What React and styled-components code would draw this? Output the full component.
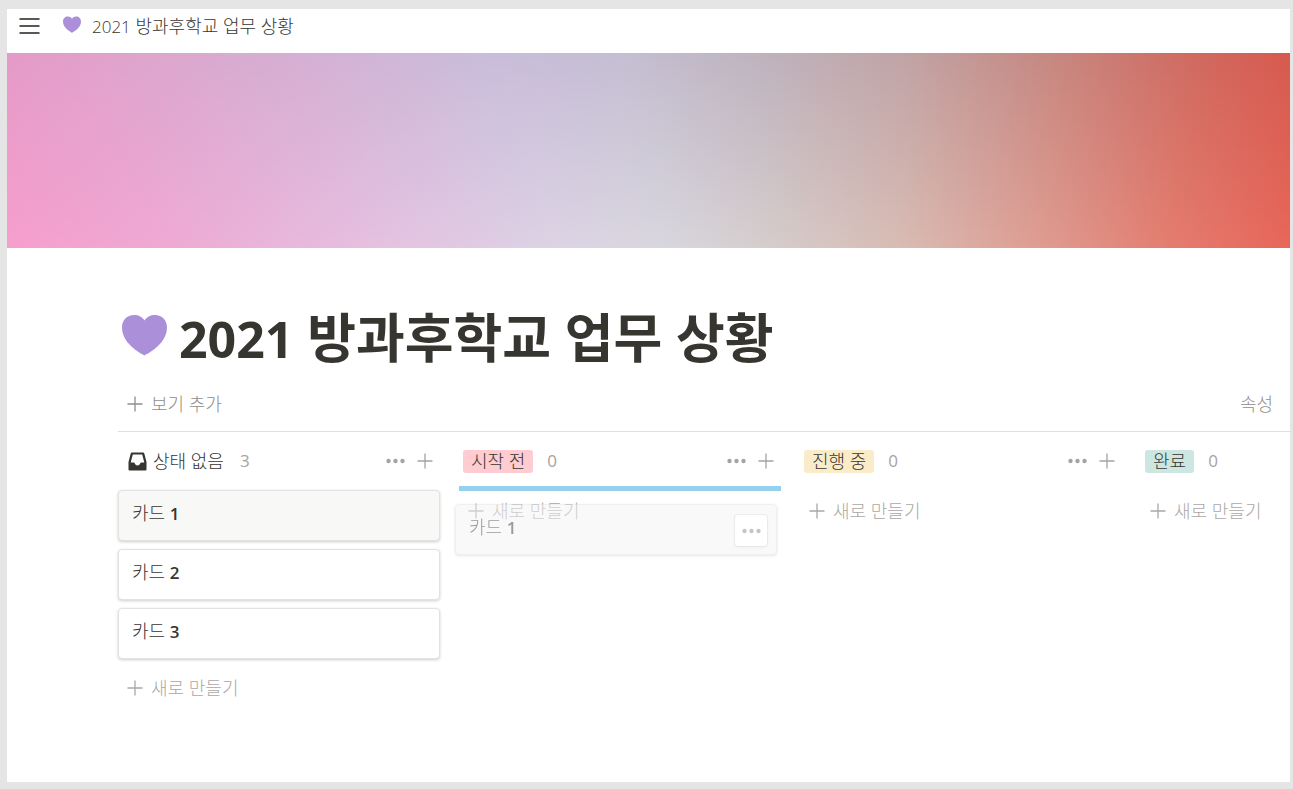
import React from "react";
import styled, { createGlobalStyle } from "styled-components";

const GlobalStyle = createGlobalStyle`
  * {
    box-sizing: border-box;
  }

  body {
    margin: 0;
    background: #e5e5e5;
    color: #37352f;
    font-family: "Open Sans", "Noto Sans CJK KR", sans-serif;
    font-size: 18px;
    line-height: 24px;
  }

  button {
    border: none;
    background: none;
    padding: 0;
    color: inherit;
    font: inherit;
    cursor: pointer;
  }
`;

const Page = styled.div`
  margin: 0 3px 0 7px;
  padding: 9px 0 7px;
`;

const Sheet = styled.div`
  min-height: calc(100vh - 16px);
  background: #fff;
  overflow: hidden;
`;

const TopBar = styled.header`
  display: flex;
  align-items: center;
  height: 44px;
  padding: 0 12px 10px;
`;

const MenuButton = styled.button`
  display: flex;
  margin-right: 23px;
`;

const Crumb = styled.a`
  display: flex;
  align-items: center;
  gap: 11px;
  color: #37352f;
  font-weight: 300;
  text-decoration: none;
`;

const Digits = styled.span`
  font-size: 17px;
`;

const Cover = styled.div`
  position: relative;
  height: 195px;
  background: linear-gradient(
    90deg,
    #f79fcd 0%,
    #f0a8d3 11%,
    #e6c0e0 28%,
    #ddd3e5 42%,
    #d9d7df 51%,
    #d6cecd 59%,
    #d9bbb3 70%,
    #e09b90 81%,
    #e57c6f 91%,
    #e8675a 100%
  );

  &::before {
    content: "";
    position: absolute;
    inset: 0;
    background: linear-gradient(
      90deg,
      #e49ac7 0%,
      #dca6cd 12%,
      #d5aed3 22%,
      #c9bcda 37%,
      #c4bed2 48%,
      #beb3bf 58%,
      #c0a3a5 70%,
      #c6867f 82%,
      #cf6b62 92%,
      #d65a4e 100%
    );
    mask-image: linear-gradient(180deg, #000, transparent);
  }
`;

const Content = styled.main`
  padding: 58px 0 0 111px;
`;

const TitleRow = styled.div`
  display: flex;
  align-items: center;
  gap: 12px;
  height: 64px;
  padding-left: 4px;
`;

const Title = styled.h1`
  margin: 0;
  font-size: 53px;
  font-weight: 700;
  line-height: 64px;
  white-space: nowrap;

  ${Digits} {
    font-size: 50px;
  }
`;

const ViewBar = styled.div`
  display: flex;
  align-items: center;
  justify-content: space-between;
  height: 62px;
  padding: 6px 17px 0 9px;
  border-bottom: 1px solid #e0e0df;
  color: #8f8e8a;
  font-weight: 300;
`;

const AddButton = styled.button`
  display: flex;
  align-items: center;
  gap: 8px;
`;

const Board = styled.div`
  display: flex;
  gap: 19px;
`;

const Column = styled.section`
  position: relative;
  flex: 0 0 322px;
`;

const ColumnHeader = styled.div`
  display: flex;
  align-items: center;
  height: 58px;
  padding: 0 7px 0 4px;
  color: #a5a4a1;
`;

const Status = styled.h2`
  display: flex;
  align-items: center;
  gap: 6px;
  height: 23px;
  margin: 0 14px 0 0;
  padding: 0 ${({ $color }) => ($color ? "8px" : "2px 0 6px")};
  border-radius: 3px;
  background: ${({ $color }) => $color || "transparent"};
  color: #37352f;
  font-size: 18px;
  font-weight: 300;
`;

const Actions = styled.div`
  display: flex;
  align-items: center;
  gap: 12px;
  margin-left: auto;

  button {
    display: flex;
  }
`;

const Card = styled.article`
  height: 51px;
  margin-bottom: 8px;
  padding: 10px 13px;
  border: 1px solid #e2e2e1;
  border-radius: 4px;
  background: ${({ $active }) => ($active ? "#f8f8f7" : "#fff")};
  box-shadow: 0 1px 3px rgba(15, 15, 15, 0.2);
  font-weight: 300;
`;

const CardNumber = styled(Digits)`
  font-weight: 600;
`;

const NewButton = styled(AddButton)`
  height: 42px;
  padding-left: 9px;
  color: #a9a8a5;
  font-weight: 300;
`;

const DropLine = styled.div`
  position: absolute;
  top: 54px;
  left: 0;
  right: 0;
  height: 5px;
  background: #93d1ec;
`;

const DraggedCard = styled(Card)`
  position: absolute;
  top: 72px;
  left: -4px;
  width: 322px;
  display: flex;
  justify-content: space-between;
  background: #f5f5f4;
  opacity: 0.5;
`;

const CardMenu = styled.button`
  display: flex;
  align-items: center;
  justify-content: center;
  width: 32px;
  height: 31px;
  margin-right: -4px;
  border-radius: 3px;
  background: #fff;
  box-shadow: 0 0 0 1px rgba(15, 15, 15, 0.1), 0 2px 4px rgba(15, 15, 15, 0.08);
  color: #908f8c;
`;

const Heart = ({ size }) => (
  <svg width={size} height={Math.round((size * 49) / 45)} viewBox="0 0 45 49" fill="#ab8fd8" aria-hidden="true">
    <path d="M22.5 41.5C17 38.5 0 29 0 13.5C0 6 5 1 12 1C16.5 1 20.5 3 22.5 6.5C24.5 3 28.5 1 33 1C40 1 45 6 45 13.5C45 29 28 38.5 22.5 41.5Z" />
  </svg>
);

const Plus = () => (
  <svg width="16" height="16" viewBox="0 0 16 16" stroke="currentColor" strokeWidth="1.3" aria-hidden="true">
    <path d="M8 0.5V15.5M0.5 8H15.5" />
  </svg>
);

const Dots = () => (
  <svg width="19" height="6" viewBox="0 0 19 6" fill="currentColor" aria-hidden="true">
    <circle cx="2.5" cy="3" r="2.2" />
    <circle cx="9.5" cy="3" r="2.2" />
    <circle cx="16.5" cy="3" r="2.2" />
  </svg>
);

const Inbox = () => (
  <svg width="19" height="19" viewBox="0 0 19 19" aria-hidden="true">
    <path
      fill="#37352f"
      fillRule="evenodd"
      d="M4 0.5H15Q16 0.5 16.3 1.5L18.5 10V17.5Q18.5 18.5 17.5 18.5H1.5Q0.5 18.5 0.5 17.5V10L2.7 1.5Q3 0.500 4 0.5ZM4.800 2.5L2.7 10.5H5.500Q6.500 10.500 6.800 11.500Q7.500 13.5 9.5 13.5Q11.500 13.5 12.200 11.500Q12.500 10.5 13.500 10.500H16.3L14.200 2.5Z"
    />
  </svg>
);

const columns = [
  { name: "상태 없음", count: 3, cards: [1, 2, 3] },
  { name: "시작 전", count: 0, color: "#ffccd1", cards: [], dropTarget: true },
  { name: "진행 중", count: 0, color: "#fbecc9", cards: [] },
  { name: "완료", count: 0, color: "#cce7e1", cards: [] },
];

const App = () => {
  return (
    <Page lang="ko">
      <GlobalStyle />
      <Sheet>
        <TopBar>
          <MenuButton aria-label="메뉴">
            <svg width="21" height="18" viewBox="0 0 21 18" stroke="#5a5853" strokeWidth="2" aria-hidden="true">
              <path d="M0.5 2H20.5M0.5 9H20.5M0.5 16H20.5" />
            </svg>
          </MenuButton>
          <Crumb href="#">
            <Heart size={18} />
            <span>
              <Digits>2021</Digits> 방과후학교 업무 상황
            </span>
          </Crumb>
        </TopBar>
        <Cover />

        <Content>
          <TitleRow>
            <Heart size={45} />
            <Title>
              <Digits>2021</Digits> 방과후학교 업무 상황
            </Title>
          </TitleRow>

          <ViewBar>
            <AddButton>
              <Plus />
              보기 추가
            </AddButton>
            <button>속성</button>
          </ViewBar>

          <Board>
            {columns.map((column) => (
              <Column key={column.name}>
                <ColumnHeader>
                  <Status $color={column.color}>
                    {!column.color && <Inbox />}
                    {column.name}
                  </Status>
                  <Digits>{column.count}</Digits>
                  <Actions>
                    <button aria-label="더 보기">
                      <Dots />
                    </button>
                    <button aria-label="추가">
                      <Plus />
                    </button>
                  </Actions>
                </ColumnHeader>

                {column.cards.map((number) => (
                  <Card key={number} $active={number === 1}>
                    카드 <CardNumber>{number}</CardNumber>
                  </Card>
                ))}
                <NewButton>
                  <Plus />
                  새로 만들기
                </NewButton>

                {column.dropTarget && (
                  <>
                    <DropLine />
                    <DraggedCard>
                      <span>
                        카드 <CardNumber>1</CardNumber>
                      </span>
                      <CardMenu aria-label="카드 메뉴">
                        <Dots />
                      </CardMenu>
                    </DraggedCard>
                  </>
                )}
              </Column>
            ))}
          </Board>
        </Content>
      </Sheet>
    </Page>
  );
};

export default App;
